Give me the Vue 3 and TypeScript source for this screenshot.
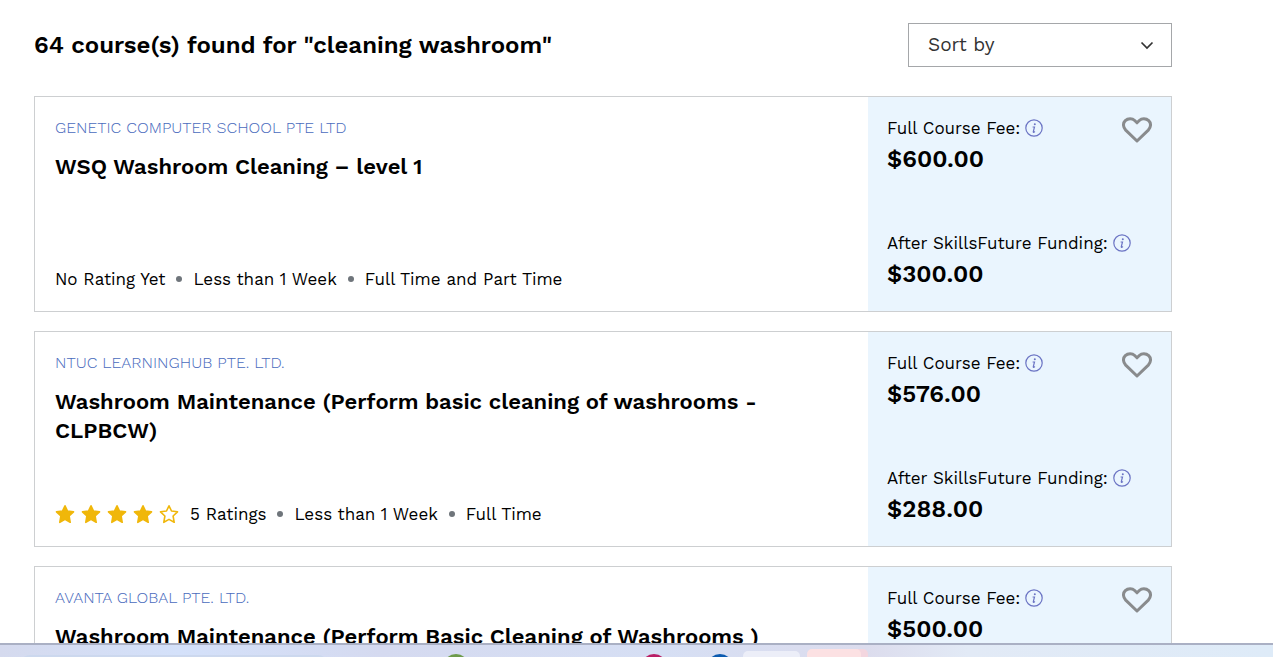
<script setup lang="ts">
import { ref } from 'vue'

interface Course {
  id: number
  provider: string
  title: string
  rating: number | null
  ratingText: string
  duration: string
  mode: string
  fee: string
  funded: string
}

const sort = ref('')

const courses = ref<Course[]>([
  { id: 1, provider: 'GENETIC COMPUTER SCHOOL PTE LTD', title: 'WSQ Washroom Cleaning – level 1', rating: null, ratingText: 'No Rating Yet', duration: 'Less than 1 Week', mode: 'Full Time and Part Time', fee: '$600.00', funded: '$300.00' },
  { id: 2, provider: 'NTUC LEARNINGHUB PTE. LTD.', title: 'Washroom Maintenance (Perform basic cleaning of washrooms - CLPBCW)', rating: 4, ratingText: '5 Ratings', duration: 'Less than 1 Week', mode: 'Full Time', fee: '$576.00', funded: '$288.00' },
  { id: 3, provider: 'AVANTA GLOBAL PTE. LTD.', title: 'Washroom Maintenance (Perform Basic Cleaning of Washrooms )', rating: null, ratingText: '', duration: '', mode: '', fee: '$500.00', funded: '' },
])

function feeLines(c: Course) {
  return [
    { label: 'Full Course Fee:', value: c.fee },
    { label: 'After SkillsFuture Funding:', value: c.funded },
  ].filter((f) => f.value)
}
</script>

<template>
  <div class="screen">
    <main class="results">
      <header class="top">
        <h1>64 course(s) found for "cleaning washroom"</h1>
        <div class="sort">
          <select v-model="sort" aria-label="Sort by">
            <option value="">Sort by</option>
          </select>
          <svg class="chevron" viewBox="0 0 14 9" aria-hidden="true"><path d="M1.500 1.500 7 7l5.500-5.500" /></svg>
        </div>
      </header>

      <article v-for="c in courses" :key="c.id" class="card">
        <div class="body">
          <a class="provider" href="#">{{ c.provider }}</a>
          <h2>{{ c.title }}</h2>
          <div v-if="c.ratingText" class="meta">
            <span v-if="c.rating !== null" class="stars" role="img" :aria-label="c.rating + ' out of 5'">
              <svg v-for="n in 5" :key="n" viewBox="0 0 20 20" :class="{ empty: n > c.rating }">
                <path d="M10 1.800 12.500 7l6 .8-4.400 4.200 1.100 6.300L10 15.400l-5.200 2.900L5.900 12 1.500 7.800l6-.8z" />
              </svg>
            </span>
            <span>{{ c.ratingText }}</span>
            <i class="dot"></i>
            <span>{{ c.duration }}</span>
            <i class="dot"></i>
            <span>{{ c.mode }}</span>
          </div>
        </div>

        <div class="fees">
          <div class="fee-list">
            <div v-for="f in feeLines(c)" :key="f.label">
              <div class="label">
                <span>{{ f.label }}</span>
                <button class="info" type="button" :aria-label="'About ' + f.label">
                  <svg viewBox="0 0 18 18">
                    <circle cx="9" cy="9" r="8.200" />
                    <circle class="fill" cx="9.800" cy="5.300" r="1" />
                    <path d="M7.600 8h1.900L8.300 12.700q-.2.900.7.500l1-.6" />
                  </svg>
                </button>
              </div>
              <div class="price">{{ f.value }}</div>
            </div>
          </div>
          <button class="heart" type="button" aria-label="Save course">
            <svg viewBox="0 0 30 26">
              <path d="M15 24 3.700 13.100C.8 10.100.8 6 3.300 3.600 6 1 10.200 1 12.700 3.500L15 5.800l2.300-2.300C19.800 1 24 1 26.700 3.600c2.500 2.400 2.500 6.500-.4 9.500z" />
            </svg>
          </button>
        </div>
      </article>
    </main>

    <footer class="taskbar" aria-hidden="true">
      <span class="search"></span>
      <svg class="apps" viewBox="0 0 430 12">
        <circle cx="17" cy="22" r="13" fill="#6d9b4b" />
        <circle cx="215" cy="22" r="13" fill="#b91f66" />
        <circle cx="281" cy="22" r="13" fill="#0c5bb0" />
        <rect x="304" y="6" width="57" height="20" rx="5" fill="#eceef8" />
        <rect x="380" y="4" width="49" height="20" rx="5" fill="#f3d6df" />
        <rect x="368" y="4" width="54" height="20" rx="5" fill="#fce1e3" />
      </svg>
    </footer>
  </div>
</template>

<style>
body {
  margin: 0;
}
</style>

<style scoped>
.screen {
  height: 100vh;
  display: flex;
  flex-direction: column;
  overflow: hidden;
  background: #fff;
  color: #000;
  font-family: "Work Sans", Inter, "Liberation Sans", sans-serif;
  font-size: 17px;
  font-weight: 400;
}
.results {
  flex: 1;
  min-height: 0;
  overflow: hidden;
  padding: 23px 101px 0 34px;
}
.top {
  display: flex;
  align-items: center;
  justify-content: space-between;
  margin-bottom: 29px;
}
h1 {
  margin: 0;
  font-size: 24px;
  line-height: 32px;
  font-weight: 600;
}
.sort {
  position: relative;
  width: 264px;
}
select {
  appearance: none;
  display: block;
  box-sizing: border-box;
  width: 100%;
  height: 44px;
  padding: 0 40px 2px 19px;
  border: 1px solid #a5a7aa;
  border-radius: 0;
  background: #fff;
  color: #333;
  font-family: inherit;
  font-size: 19px;
  font-weight: 400;
}
.chevron {
  position: absolute;
  right: 18px;
  top: 18px;
  width: 14px;
  height: 9px;
  fill: none;
  stroke: #333;
  stroke-width: 1.700;
  pointer-events: none;
}
.card {
  box-sizing: border-box;
  display: flex;
  min-height: 216px;
  margin-bottom: 19px;
  border: 1px solid #cdcfd1;
}
.body {
  flex: 1;
  display: flex;
  flex-direction: column;
  align-items: flex-start;
  padding: 20px 100px 20px 20px;
}
.provider {
  color: #4a6bbd;
  font-size: 16px;
  line-height: 22px;
  font-weight: 300;
  text-decoration: none;
}
h2 {
  margin: 13px 0 0;
  font-size: 22px;
  line-height: 29px;
  font-weight: 600;
}
.meta {
  display: flex;
  align-items: center;
  margin-top: auto;
  line-height: 24px;
}
.dot {
  width: 6px;
  height: 6px;
  margin: 0 11px;
  border-radius: 50%;
  background: #6f757b;
}
.stars {
  display: flex;
  gap: 6px;
  margin-right: 11px;
}
.stars svg {
  width: 20px;
  height: 20px;
  fill: #f0b70a;
  stroke: #f0b70a;
  stroke-width: 1.600;
  stroke-linejoin: round;
}
.stars .empty {
  fill: none;
}
.fees {
  box-sizing: border-box;
  width: 303px;
  display: flex;
  align-items: flex-start;
  background: #eaf5fe;
  padding: 20px 19px;
}
.fee-list {
  flex: 1;
  min-width: 0;
  align-self: stretch;
  display: flex;
  flex-direction: column;
  justify-content: space-between;
}
.label {
  display: flex;
  align-items: center;
  gap: 5px;
  line-height: 22px;
  white-space: nowrap;
}
.price {
  margin-top: 3px;
  font-size: 24px;
  line-height: 34px;
  font-weight: 600;
}
button {
  padding: 0;
  border: 0;
  background: none;
  cursor: pointer;
}
button svg {
  display: block;
  fill: none;
}
.info svg {
  width: 18px;
  height: 18px;
  stroke: #6b74c4;
  stroke-width: 1.200;
}
.info .fill {
  fill: #6b74c4;
  stroke: none;
}
.heart svg {
  width: 30px;
  height: 26px;
  stroke: #898b8d;
  stroke-width: 3;
  stroke-linejoin: round;
}
.taskbar {
  box-sizing: border-box;
  flex: none;
  position: relative;
  height: 14px;
  overflow: hidden;
  border-top: 2px solid #aab0c4;
  background: linear-gradient(90deg, #d5daee 0, #d4e1fa 14%, #d5daf0 30%, #d6dff4 52%, #dcdced 68%, #e2eaf6 76%, #deebf8 100%);
}
.search {
  position: absolute;
  left: 20px;
  top: 10px;
  width: 308px;
  height: 20px;
  border-radius: 10px;
  background: #ccd8ee;
}
.apps {
  position: absolute;
  left: 439px;
  top: 0;
  width: 430px;
  height: 12px;
}
</style>
